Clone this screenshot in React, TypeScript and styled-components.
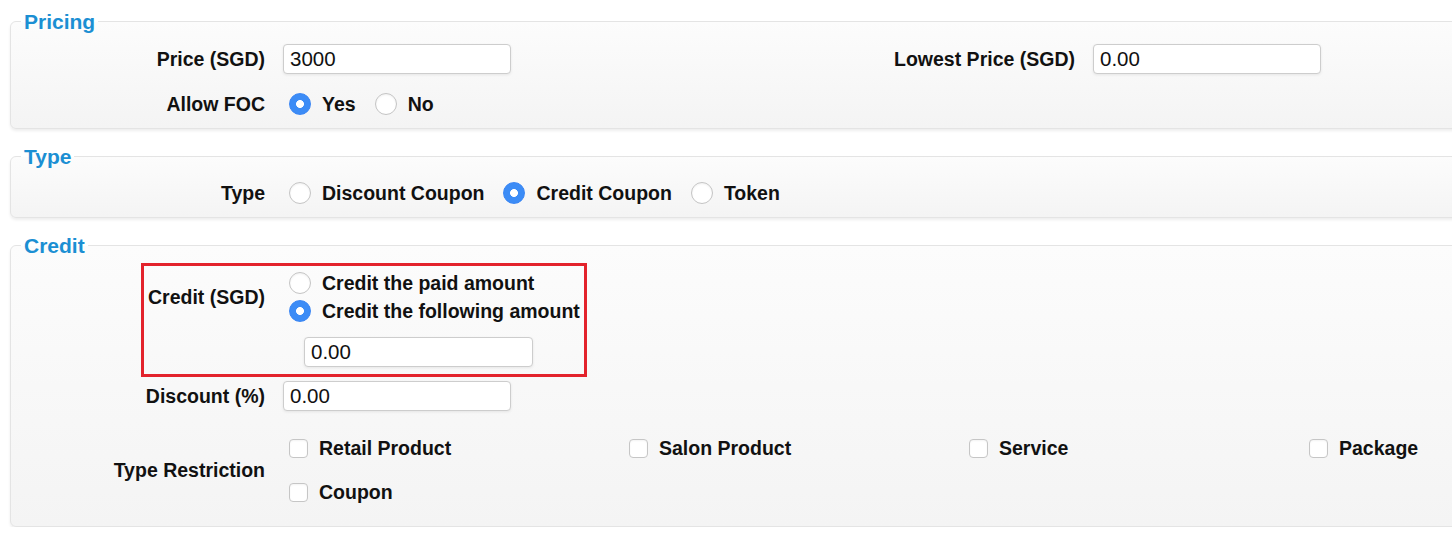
import React from "react";
import styled, { createGlobalStyle } from "styled-components";

const GlobalStyle = createGlobalStyle`
  html, body {
    margin: 0;
    padding: 0;
    background: #ffffff;
    overflow: hidden;
  }
  body {
    font-family: "Liberation Sans", Arial, Helvetica, sans-serif;
    color: #111;
  }
`;

const Page = styled.div`
  padding: 10px 0 0 10px;
  width: 1800px;
`;

const Section = styled.fieldset<{ $gap?: number }>`
  width: 1620px;
  margin: ${({ $gap }) => $gap ?? 0}px 0 0 0;
  padding: 0 0 9px 0;
  border: 1px solid #e4e4e4;
  border-radius: 6px;
  background: linear-gradient(#fcfcfc, #f4f4f4);
  box-shadow: 0 2px 3px rgba(0, 0, 0, 0.07);
  min-width: 0;
`;

const Legend = styled.legend`
  margin-left: 10px;
  padding: 0 3px;
  font-size: 21px;
  line-height: 23px;
  font-weight: 700;
  color: #1b8fd3;
`;

const Row = styled.div<{ $mt: number }>`
  display: grid;
  grid-template-columns: 254px 1fr;
  column-gap: 18px;
  align-items: center;
  margin-top: ${({ $mt }) => $mt}px;
  min-height: 30px;
`;

const Pair = styled.div`
  display: grid;
  grid-template-columns: 810px 810px;
  margin-top: 10.5px;
`;

const Label = styled.div<{ $top?: number }>`
  text-align: right;
  font-size: 19.5px;
  line-height: 22px;
  font-weight: 700;
  color: #111;
  align-self: ${({ $top }) => ($top !== undefined ? "start" : "center")};
  margin-top: ${({ $top }) => $top ?? 0}px;
`;

const TextInput = styled.input<{ $w?: number; $ml?: number }>`
  box-sizing: border-box;
  width: ${({ $w }) => $w ?? 228}px;
  height: 30px;
  margin: 0 0 0 ${({ $ml }) => $ml ?? 0}px;
  padding: 0 6px;
  border: 1px solid #cdcdcd;
  border-radius: 4px;
  background: #fff;
  box-shadow: 0 1px 3px rgba(0, 0, 0, 0.08);
  font-family: "Liberation Sans", Arial, sans-serif;
  font-size: 20.5px;
  color: #111;
  outline: none;
`;

const Options = styled.div<{ $gap?: number }>`
  display: flex;
  align-items: center;
  gap: ${({ $gap }) => $gap ?? 19}px;
  padding-left: 6px;
`;

const Stack = styled.div`
  display: flex;
  flex-direction: column;
  align-items: flex-start;
  gap: 6px;
  padding-left: 6px;
`;

const Option = styled.label`
  display: inline-flex;
  align-items: center;
  gap: 11px;
  font-size: 19.5px;
  line-height: 22px;
  font-weight: 700;
  color: #111;
  white-space: nowrap;
`;

const Radio = styled.input.attrs({ type: "radio" })`
  appearance: none;
  box-sizing: border-box;
  width: 22px;
  height: 22px;
  margin: 0;
  border-radius: 50%;
  border: 1px solid #c4c4c4;
  background: #fff;
  box-shadow: inset 0 1px 2px rgba(0, 0, 0, 0.06);
  &:checked {
    border-color: #3a86f4;
    background: radial-gradient(circle, #fff 0 3.6px, #3c8cf6 4.3px);
    box-shadow: none;
  }
`;

const Check = styled.input.attrs({ type: "checkbox" })`
  appearance: none;
  box-sizing: border-box;
  width: 19px;
  height: 19px;
  margin: 0;
  border-radius: 4px;
  border: 1px solid #c6c6c6;
  background: #fff;
  box-shadow: inset 0 1px 2px rgba(0, 0, 0, 0.05);
`;

const Highlight = styled.div`
  box-sizing: border-box;
  width: 446px;
  margin: 6px 0 0 130px;
  padding: 3px 0 7px 0;
  border: 3px solid #e3232c;
  display: grid;
  grid-template-columns: 121px 1fr;
  column-gap: 18px;
`;

const CreditOptions = styled.div`
  display: flex;
  flex-direction: column;
  padding-top: 3px;
`;

const Spacer = styled.div<{ $h: number }>`
  height: ${({ $h }) => $h}px;
`;

const CheckGrid = styled.div`
  display: grid;
  grid-template-columns: repeat(4, 340px);
  grid-auto-rows: 30px;
  row-gap: 14px;
  align-items: center;
  padding-left: 6px;
`;

const checks = ["Retail Product", "Salon Product", "Service", "Package", "Coupon"];

export default function App() {
  return (
    <>
      <GlobalStyle />
      <Page>
        <Section>
          <Legend>Pricing</Legend>
          <Pair>
            <Row $mt={0}>
              <Label>Price (SGD)</Label>
              <TextInput defaultValue="3000" />
            </Row>
            <Row $mt={0}>
              <Label>Lowest Price (SGD)</Label>
              <TextInput defaultValue="0.00" />
            </Row>
          </Pair>
          <Row $mt={15}>
            <Label>Allow FOC</Label>
            <Options>
              <Option>
                <Radio name="foc" defaultChecked />
                Yes
              </Option>
              <Option>
                <Radio name="foc" />
                No
              </Option>
            </Options>
          </Row>
        </Section>

        <Section $gap={16}>
          <Legend>Type</Legend>
          <Row $mt={10.5}>
            <Label>Type</Label>
            <Options>
              <Option>
                <Radio name="type" />
                Discount Coupon
              </Option>
              <Option>
                <Radio name="type" defaultChecked />
                Credit Coupon
              </Option>
              <Option>
                <Radio name="type" />
                Token
              </Option>
            </Options>
          </Row>
        </Section>

        <Section $gap={16}>
          <Legend>Credit</Legend>
          <Highlight>
            <Label $top={17}>Credit (SGD)</Label>
            <CreditOptions>
              <Stack>
                <Option>
                  <Radio name="credit" />
                  Credit the paid amount
                </Option>
                <Option>
                  <Radio name="credit" defaultChecked />
                  Credit the following amount
                </Option>
              </Stack>
              <Spacer $h={15} />
              <TextInput defaultValue="0.00" $w={229} $ml={21} />
            </CreditOptions>
          </Highlight>
          <Row $mt={4}>
            <Label>Discount (%)</Label>
            <TextInput defaultValue="0.00" />
          </Row>
          <Row $mt={22}>
            <Label>Type Restriction</Label>
            <CheckGrid>
              {checks.map((c) => (
                <Option key={c}>
                  <Check />
                  {c}
                </Option>
              ))}
            </CheckGrid>
          </Row>
          <Spacer $h={10} />
        </Section>
      </Page>
    </>
  );
}
